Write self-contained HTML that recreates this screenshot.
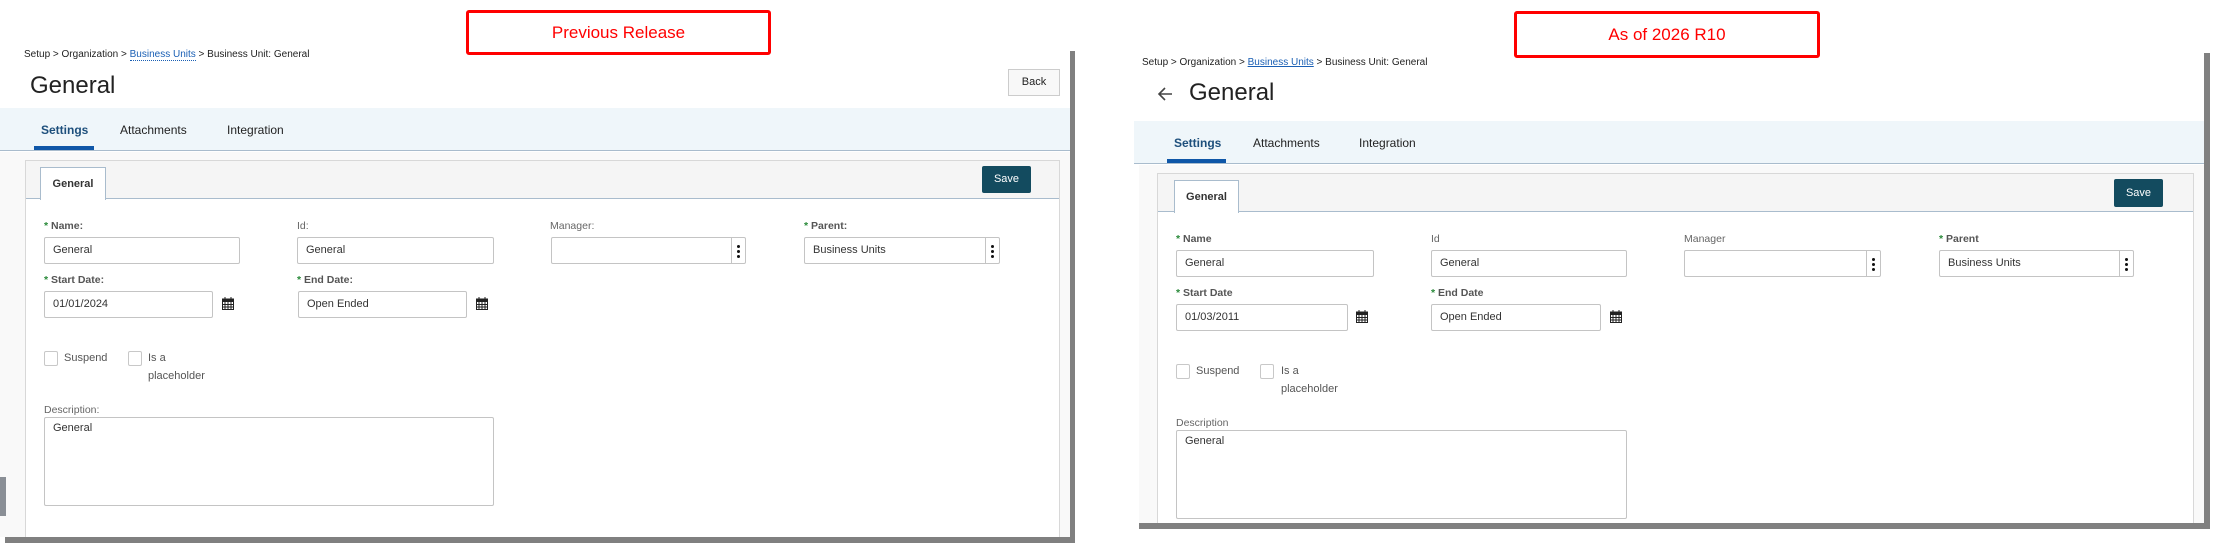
<!DOCTYPE html>
<html><head><meta charset="utf-8">
<style>
*{box-sizing:border-box;margin:0;padding:0}
body{width:2214px;height:543px;background:#fff;position:relative;overflow:hidden;font-family:"Liberation Sans",sans-serif;color:#222}
.a{position:absolute}
.redbox{border:3px solid #f00;border-radius:3px;color:#f00;font-size:17px;text-align:center}
.bc{font-size:10px;color:#222;white-space:nowrap}
.bc span{color:#1a5fb4}
.title{font-size:24px;color:#222}
.tabbar{background:#eff6fa;border-bottom:1.5px solid #a9bccd}
.tab{font-size:12px;color:#222}
.tab.on{color:#1d4f7c;font-weight:bold}
.ul{background:#0f57a8;height:4px}
.panel{background:#fff;border:1px solid #d8d8d8}
.phead{background:#f5f5f5;border-bottom:1px solid #a9bccd}
.ptab{background:#fff;border:1px solid #a9bccd;border-bottom:none;font-size:11px;font-weight:bold;color:#333;text-align:center}
.save{background:#134b5f;color:#fff;font-size:11px;border-radius:2px;text-align:center}
.lbl{font-size:10.5px;color:#666;white-space:nowrap}
.lbl b{color:#2a8a3a;font-weight:bold}
.lbl.r{color:#555;font-weight:bold}
.inp{border:1px solid #c4c4c4;background:#fff;font-size:11px;color:#333;padding-left:8px;border-radius:2px}
.dots{position:absolute;right:0;top:0;bottom:0;width:14px;border-left:1px solid #c4c4c4}
.dots i{position:absolute;left:5px;width:3px;height:3px;background:#111;border-radius:50%}
.cb{width:14px;height:15px;border:1px solid #c8c8c8;border-radius:2px;background:#fff}
.txt{font-size:11px;color:#555;white-space:nowrap}
.cal{width:12px;height:13px}
</style></head><body>

<!-- LEFT -->
<div class="a redbox" style="left:466px;top:10px;width:305px;height:45px;line-height:39px">Previous Release</div>
<div class="a" style="left:1070px;top:51px;width:5px;height:492px;background:#808080"></div>
<div class="a" style="left:5px;top:537px;width:1070px;height:6px;background:#808080"></div>
<div class="a bc" style="left:24px;top:49px">Setup &gt; Organization &gt; <span style="border-bottom:1px dotted #1a5fb4">Business Units</span> &gt; Business Unit: General</div>
<div class="a title" style="left:30px;top:72px">General</div>
<div class="a" style="left:1008px;top:69px;width:52px;height:27px;border:1px solid #ccc;background:#f8f8f8;font-size:11px;text-align:center;line-height:25px">Back</div>
<div class="a tabbar" style="left:0;top:108px;width:1070px;height:43px"></div>
<div class="a tab on" style="left:41px;top:123px">Settings</div>
<div class="a tab" style="left:120px;top:123px">Attachments</div>
<div class="a tab" style="left:227px;top:123px">Integration</div>
<div class="a ul" style="left:34px;top:146px;width:60px"></div>
<div class="a" style="left:0;top:152px;width:1070px;height:385px;background:#f9f9f9"></div>
<div class="a" style="left:0;top:477px;width:6px;height:39px;background:#8a8f96"></div>
<div class="a panel" style="left:25px;top:160px;width:1035px;height:377px;border-bottom:none"></div>
<div class="a phead" style="left:26px;top:161px;width:1033px;height:38px"></div>
<div class="a ptab" style="left:40px;top:167px;width:66px;height:33px;line-height:32px">General</div>
<div class="a save" style="left:982px;top:166px;width:49px;height:27px;line-height:27px">Save</div>

<div class="a lbl r" style="left:44px;top:220px"><b>*</b> Name:</div>
<div class="a lbl" style="left:297px;top:220px">Id:</div>
<div class="a lbl" style="left:550px;top:220px">Manager:</div>
<div class="a lbl r" style="left:804px;top:220px"><b>*</b> Parent:</div>
<div class="a inp" style="left:44px;top:237px;width:196px;height:27px;line-height:25px">General</div>
<div class="a inp" style="left:297px;top:237px;width:197px;height:27px;line-height:25px">General</div>
<div class="a inp" style="left:551px;top:237px;width:195px;height:27px"><div class="dots"><i style="top:7px"></i><i style="top:12px"></i><i style="top:17px"></i></div></div>
<div class="a inp" style="left:804px;top:237px;width:196px;height:27px;line-height:25px">Business Units<div class="dots"><i style="top:7px"></i><i style="top:12px"></i><i style="top:17px"></i></div></div>
<div class="a lbl r" style="left:44px;top:274px"><b>*</b> Start Date:</div>
<div class="a lbl r" style="left:297px;top:274px"><b>*</b> End Date:</div>
<div class="a inp" style="left:44px;top:291px;width:169px;height:27px;line-height:25px">01/01/2024</div>
<div class="a inp" style="left:298px;top:291px;width:169px;height:27px;line-height:25px">Open Ended</div>
<svg class="a cal" style="left:222px;top:297px" viewBox="0 0 12 13"><rect x="0.5" y="2" width="11" height="10.5" fill="#fff" stroke="#222"/><rect x="0" y="2" width="12" height="3" fill="#222"/><path d="M3 0v3M9 0v3M0 7.5h12M0 10h12M3 5v8M6 5v8M9 5v8" stroke="#222" stroke-width="1"/></svg>
<svg class="a cal" style="left:476px;top:297px" viewBox="0 0 12 13"><rect x="0.5" y="2" width="11" height="10.5" fill="#fff" stroke="#222"/><rect x="0" y="2" width="12" height="3" fill="#222"/><path d="M3 0v3M9 0v3M0 7.5h12M0 10h12M3 5v8M6 5v8M9 5v8" stroke="#222" stroke-width="1"/></svg>
<div class="a cb" style="left:44px;top:351px"></div>
<div class="a txt" style="left:64px;top:352px">Suspend</div>
<div class="a cb" style="left:128px;top:351px"></div>
<div class="a txt" style="left:148px;top:352px">Is a</div>
<div class="a txt" style="left:148px;top:370px">placeholder</div>
<div class="a lbl" style="left:44px;top:404px">Description:</div>
<div class="a inp" style="left:44px;top:417px;width:450px;height:89px;padding-top:4px">General</div>

<!-- RIGHT -->
<div class="a redbox" style="left:1514px;top:11px;width:306px;height:47px;line-height:41px">As of 2026 R10</div>
<div class="a" style="left:2204px;top:53px;width:6px;height:476px;background:#808080"></div>
<div class="a" style="left:1139px;top:523px;width:1071px;height:6px;background:#808080"></div>
<div class="a bc" style="left:1142px;top:57px">Setup &gt; Organization &gt; <span style="text-decoration:underline">Business Units</span> &gt; Business Unit: General</div>
<svg class="a" style="left:1157px;top:86px" width="16" height="16" viewBox="0 0 16 16"><path d="M15 8H2M8 2L2 8l6 6" fill="none" stroke="#444" stroke-width="1.6"/></svg>
<div class="a title" style="left:1189px;top:79px">General</div>
<div class="a tabbar" style="left:1134px;top:121px;width:1070px;height:43px"></div>
<div class="a tab on" style="left:1174px;top:136px">Settings</div>
<div class="a tab" style="left:1253px;top:136px">Attachments</div>
<div class="a tab" style="left:1359px;top:136px">Integration</div>
<div class="a ul" style="left:1167px;top:159px;width:59px"></div>
<div class="a" style="left:1139px;top:165px;width:1065px;height:358px;background:#f9f9f9"></div>
<div class="a panel" style="left:1157px;top:173px;width:1037px;height:350px;border-bottom:none"></div>
<div class="a phead" style="left:1158px;top:174px;width:1035px;height:38px"></div>
<div class="a ptab" style="left:1174px;top:180px;width:65px;height:33px;line-height:32px">General</div>
<div class="a save" style="left:2114px;top:179px;width:49px;height:28px;line-height:28px">Save</div>

<div class="a lbl r" style="left:1176px;top:233px"><b>*</b> Name</div>
<div class="a lbl" style="left:1431px;top:233px">Id</div>
<div class="a lbl" style="left:1684px;top:233px">Manager</div>
<div class="a lbl r" style="left:1939px;top:233px"><b>*</b> Parent</div>
<div class="a inp" style="left:1176px;top:250px;width:198px;height:27px;line-height:25px">General</div>
<div class="a inp" style="left:1431px;top:250px;width:196px;height:27px;line-height:25px">General</div>
<div class="a inp" style="left:1684px;top:250px;width:197px;height:27px"><div class="dots"><i style="top:7px"></i><i style="top:12px"></i><i style="top:17px"></i></div></div>
<div class="a inp" style="left:1939px;top:250px;width:195px;height:27px;line-height:25px">Business Units<div class="dots"><i style="top:7px"></i><i style="top:12px"></i><i style="top:17px"></i></div></div>
<div class="a lbl r" style="left:1176px;top:287px"><b>*</b> Start Date</div>
<div class="a lbl r" style="left:1431px;top:287px"><b>*</b> End Date</div>
<div class="a inp" style="left:1176px;top:304px;width:172px;height:27px;line-height:25px">01/03/2011</div>
<div class="a inp" style="left:1431px;top:304px;width:170px;height:27px;line-height:25px">Open Ended</div>
<svg class="a cal" style="left:1356px;top:310px" viewBox="0 0 12 13"><rect x="0.5" y="2" width="11" height="10.5" fill="#fff" stroke="#222"/><rect x="0" y="2" width="12" height="3" fill="#222"/><path d="M3 0v3M9 0v3M0 7.5h12M0 10h12M3 5v8M6 5v8M9 5v8" stroke="#222" stroke-width="1"/></svg>
<svg class="a cal" style="left:1610px;top:310px" viewBox="0 0 12 13"><rect x="0.5" y="2" width="11" height="10.5" fill="#fff" stroke="#222"/><rect x="0" y="2" width="12" height="3" fill="#222"/><path d="M3 0v3M9 0v3M0 7.5h12M0 10h12M3 5v8M6 5v8M9 5v8" stroke="#222" stroke-width="1"/></svg>
<div class="a cb" style="left:1176px;top:364px"></div>
<div class="a txt" style="left:1196px;top:365px">Suspend</div>
<div class="a cb" style="left:1260px;top:364px"></div>
<div class="a txt" style="left:1281px;top:365px">Is a</div>
<div class="a txt" style="left:1281px;top:383px">placeholder</div>
<div class="a lbl" style="left:1176px;top:417px">Description</div>
<div class="a inp" style="left:1176px;top:430px;width:451px;height:89px;padding-top:4px">General</div>
</body></html>
